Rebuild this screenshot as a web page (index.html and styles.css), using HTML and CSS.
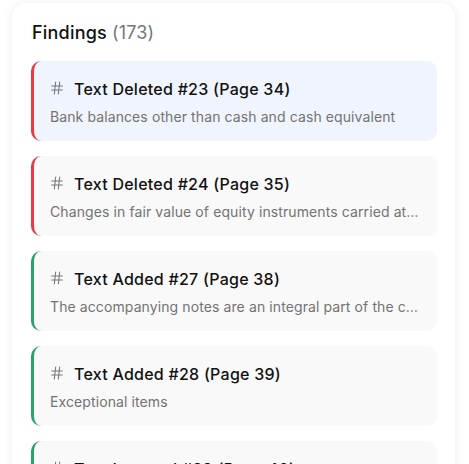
FILE: index.html
```html
<!DOCTYPE html>
<html>
<head>
<meta charset="utf-8">
<link rel="stylesheet" href="styles.css">
</head>
<body>
<div class="panel">
  <h2 class="heading">Findings <span class="count">(173)</span></h2>
  <div class="list">
    <div class="item deleted active">
      <div class="item-title"><svg class="hash" viewBox="0 0 24 24"><path d="M4 9h16M4 15h16M10 3 8 21M16 3l-2 18"/></svg><span>Text Deleted #23 (Page 34)</span></div>
      <div class="item-desc">Bank balances other than cash and cash equivalent</div>
    </div>
    <div class="item deleted">
      <div class="item-title"><svg class="hash" viewBox="0 0 24 24"><path d="M4 9h16M4 15h16M10 3 8 21M16 3l-2 18"/></svg><span>Text Deleted #24 (Page 35)</span></div>
      <div class="item-desc">Changes in fair value of equity instruments carried at fair value through other comprehensive income</div>
    </div>
    <div class="item added">
      <div class="item-title"><svg class="hash" viewBox="0 0 24 24"><path d="M4 9h16M4 15h16M10 3 8 21M16 3l-2 18"/></svg><span>Text Added #27 (Page 38)</span></div>
      <div class="item-desc">The accompanying notes are an integral part of the consolidated financial statements</div>
    </div>
    <div class="item added">
      <div class="item-title"><svg class="hash" viewBox="0 0 24 24"><path d="M4 9h16M4 15h16M10 3 8 21M16 3l-2 18"/></svg><span>Text Added #28 (Page 39)</span></div>
      <div class="item-desc">Exceptional items</div>
    </div>
    <div class="item added">
      <div class="item-title"><svg class="hash" viewBox="0 0 24 24"><path d="M4 9h16M4 15h16M10 3 8 21M16 3l-2 18"/></svg><span>Text Inserted #29 (Page 40)</span></div>
      <div class="item-desc">Other income</div>
    </div>
  </div>
</div>
</body>
</html>
```

FILE: styles.css
```css
html, body {
  margin: 0;
  padding: 0;
  background: #ffffff;
  overflow: hidden;
  height: 464px;
}
body {
  font-family: Inter, "Noto Sans", sans-serif;
  padding: 3px 14px 0 12px;
}
.panel {
  background: #ffffff;
  border-radius: 14px;
  box-shadow: 0 1px 10px rgba(0, 0, 0, 0.09);
  padding: 18px 18px 20px 19px;
  height: 600px;
}
.heading {
  margin: 0 0 0 1px;
  font-size: 18px;
  line-height: 24px;
  font-weight: 500;
  letter-spacing: 0.2px;
  color: #111111;
}
.count {
  color: #777777;
  font-weight: 400;
}
.list {
  margin-top: 16px;
  display: flex;
  flex-direction: column;
  gap: 15px;
}
.item {
  height: 80px;
  box-sizing: border-box;
  border-radius: 10px;
  border-left: 3px solid;
  background: #f9f9f9;
  padding: 17px 16px 0 16px;
}
.item.deleted { border-left-color: #df3d48; }
.item.added { border-left-color: #2f9f6e; }
.item.active { background: #f0f4fd; }
.item-title {
  display: flex;
  align-items: center;
  gap: 9px;
  height: 22px;
  font-size: 16px;
  font-weight: 500;
  letter-spacing: 0.25px;
  color: #111111;
}
.hash {
  width: 16px;
  height: 16px;
  fill: none;
  stroke: #777777;
  stroke-width: 1.6;
  stroke-linecap: round;
  flex: none;
  margin-left: -1px;
  margin-top: -2px;
}
.item-desc {
  margin-top: 7px;
  font-size: 14px;
  line-height: 20px;
  letter-spacing: 0.1px;
  color: #737373;
  white-space: nowrap;
  overflow: hidden;
  text-overflow: ellipsis;
}
```
